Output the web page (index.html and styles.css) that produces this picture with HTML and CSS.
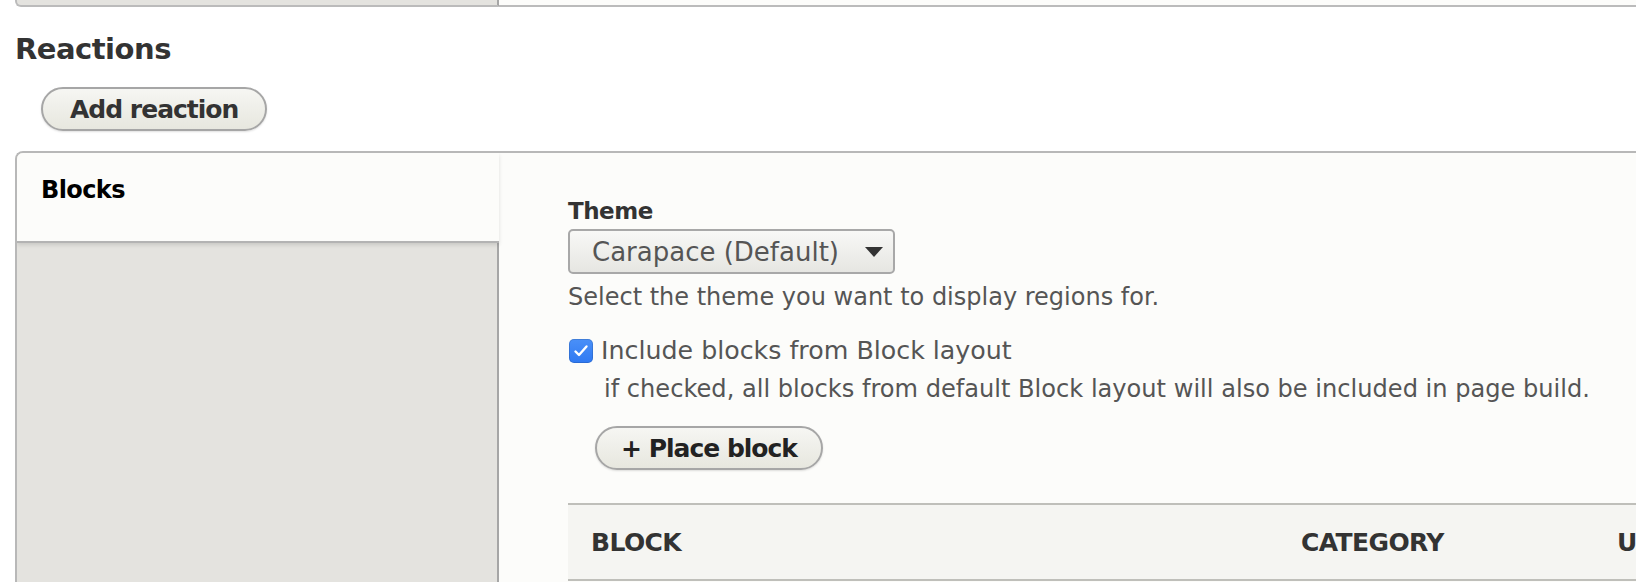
FILE: index.html
```html
<!DOCTYPE html>
<html lang="en">
<head>
<meta charset="utf-8">
<title>Reactions</title>
<link rel="stylesheet" href="styles.css">
</head>
<body>
<div class="page">
  <div class="prev-tabs">
    <div class="prev-menu"></div>
    <div class="prev-pane"></div>
  </div>

  <h2 class="section-title">Reactions</h2>

  <div class="actions">
    <button class="button" type="button">Add reaction</button>
  </div>

  <div class="vtabs">
    <ul class="vtabs-menu">
      <li class="vtabs-item is-selected">Blocks</li>
    </ul>
    <div class="vtabs-pane">
      <label class="form-label">Theme</label>
      <div class="select">
        <span class="select-value">Carapace (Default)</span>
        <svg class="select-arrow" width="18" height="10" viewBox="0 0 18 10" aria-hidden="true"><path d="M0 0H18L9 10Z" fill="#333"/></svg>
      </div>
      <div class="description">Select the theme you want to display regions for.</div>

      <div class="checkbox-row">
        <span class="checkbox">
          <svg width="16" height="14" viewBox="0 0 16 14" aria-hidden="true"><path d="M2.5 7.5L6 11L13.5 2.5" fill="none" stroke="#fff" stroke-width="2.4" stroke-linecap="round" stroke-linejoin="round"/></svg>
        </span>
        <span class="checkbox-label">Include blocks from Block layout</span>
      </div>
      <div class="check-description">if checked, all blocks from default Block layout will also be included in page build.</div>

      <div class="place-block">
        <button class="button button-dark" type="button">+ Place block</button>
      </div>

      <table class="blocks-table">
        <colgroup>
          <col class="col-block">
          <col class="col-category">
          <col class="col-rest">
        </colgroup>
        <thead>
          <tr>
            <th>Block</th>
            <th>Category</th>
            <th>U</th>
          </tr>
        </thead>
      </table>
    </div>
  </div>
</div>
</body>
</html>
```

FILE: styles.css
```css
html, body {
  margin: 0;
  padding: 0;
  overflow: hidden;
  background: #fff;
}

body {
  font-family: "DejaVu Sans", "Liberation Sans", sans-serif;
  color: #333;
}

.page {
  padding-left: 15px;
}

/* previous vertical tabs container (cut at top) */
.prev-tabs {
  display: flex;
  height: 7px;
}

.prev-menu {
  width: 484px;
  box-sizing: border-box;
  background: #e4e3df;
  border-left: 2px solid #bbb;
  border-bottom: 2px solid #bbb;
  border-right: 2px solid #a6a6a6;
  border-bottom-left-radius: 6px;
}

.prev-pane {
  flex: 1;
  background: #fcfcfa;
  border-bottom: 2px solid #bbb;
}

.section-title {
  margin: 24px 0 0;
  font-size: 29px;
  line-height: 36px;
  font-weight: 700;
  letter-spacing: -0.5px;
  color: #333;
}

.actions {
  display: flex;
  margin-top: 20px;
  padding-left: 26px;
}

.button {
  box-sizing: border-box;
  height: 44px;
  margin: 0;
  padding: 2px 27px 0;
  border: 2px solid #a6a6a6;
  border-radius: 22px;
  background: linear-gradient(#f6f6f3, #e7e7df);
  box-shadow: 0 1px 2px rgba(0, 0, 0, 0.125);
  font-family: "DejaVu Sans", "Liberation Sans", sans-serif;
  font-size: 25px;
  font-weight: 700;
  line-height: 38px;
  letter-spacing: -1px;
  color: #333;
  white-space: nowrap;
}

.button-dark {
  color: #222;
  padding: 2px 24px 0;
}

/* vertical tabs */
.vtabs {
  display: flex;
  margin-top: 20px;
  border-top: 2px solid #b8b8b8;
  border-left: 2px solid #b8b8b8;
  border-top-left-radius: 8px;
  background: #fcfcfa;
  overflow: hidden;
}

.vtabs-menu {
  flex: none;
  width: 480px;
  margin: 0;
  padding: 0;
  list-style: none;
  background: #e4e3df;
  border-right: 2px solid #a6a6a6;
}

.vtabs-item.is-selected {
  position: relative;
  margin-right: -2px;
  padding: 22px 24px 36px 24px;
  background: #fcfcfa;
  border-bottom: 2px solid #b3b3b3;
  box-shadow: 0 2px 4px rgba(0, 0, 0, 0.12);
  font-size: 24px;
  line-height: 30px;
  font-weight: 700;
  letter-spacing: -0.6px;
  color: #000;
}

.vtabs-pane {
  flex: 1;
  min-width: 0;
  padding: 44px 0 60px 69px;
  overflow: hidden;
}

.form-label {
  display: block;
  margin-bottom: 4px;
  font-size: 23px;
  line-height: 28px;
  font-weight: 700;
  letter-spacing: -0.5px;
  color: #333;
}

.select {
  display: flex;
  align-items: center;
  justify-content: space-between;
  box-sizing: border-box;
  width: 327px;
  height: 45px;
  padding: 2px 10px 0 22px;
  border: 2px solid #a8a8a8;
  border-radius: 5px;
  background: linear-gradient(#f8f8f6, #e6e6e2);
  font-size: 26px;
  line-height: 39px;
  color: #555;
}

.select-arrow {
  display: block;
  margin-top: -2px;
}

.description {
  margin-top: 8px;
  font-size: 24px;
  line-height: 30px;
  color: #555;
}

.checkbox-row {
  display: flex;
  align-items: center;
  gap: 8px;
  margin-top: 24px;
  padding-left: 1px;
  font-size: 25.3px;
  line-height: 30px;
  color: #555;
}

.checkbox {
  display: flex;
  align-items: center;
  justify-content: center;
  width: 24px;
  height: 24px;
  border-radius: 5px;
  background: linear-gradient(#4a90f8, #2f79f2);
  box-shadow: inset 0 0 0 1px rgba(0, 0, 0, 0.12);
}

.check-description {
  margin: 8px 0 0 36px;
  font-size: 24.1px;
  line-height: 30px;
  color: #555;
  white-space: nowrap;
}

.place-block {
  display: flex;
  margin: 22px 0 0 27px;
}

.blocks-table {
  margin-top: 33px;
  width: 1300px;
  table-layout: fixed;
  border-collapse: collapse;
}

.col-block { width: 710px; }
.col-category { width: 316px; }

.blocks-table th {
  padding: 23px 23px 21px;
  text-align: left;
  background: #f5f5f2;
  border-top: 2px solid #bfbfba;
  border-bottom: 2px solid #bfbfba;
  font-size: 25px;
  line-height: 30px;
  font-weight: 700;
  letter-spacing: -0.6px;
  text-transform: uppercase;
  color: #333;
  white-space: nowrap;
}
```
